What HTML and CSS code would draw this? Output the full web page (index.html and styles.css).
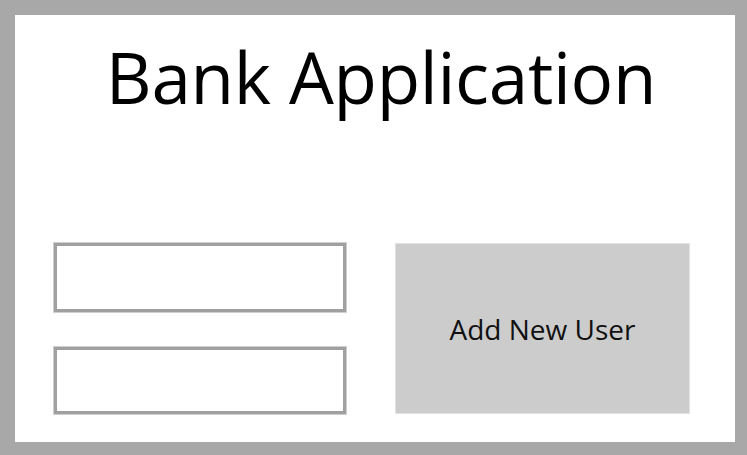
FILE: index.html
```html
<!DOCTYPE html>
<html lang="en">
<head>
  <meta charset="UTF-8">
  <meta name="viewport" content="width=device-width, initial-scale=1.0">
  <title>Bank Application</title>
  <link rel="stylesheet" href="styles.css">
</head>
<body>
  <div class="window">
    <h1 class="title">Bank Application</h1>
    <div class="controls">
      <div class="fields">
        <input type="text" class="field">
        <input type="text" class="field">
      </div>
      <button type="button" class="add-btn">Add New User</button>
    </div>
  </div>
</body>
</html>
```

FILE: styles.css
```css
html, body {
  margin: 0;
  height: 100%;
}

body {
  background-color: #a8a8a8;
  padding: 15px 12px 13px 15px;
  box-sizing: border-box;
  font-family: "Open Sans", "Noto Sans", sans-serif;
}

.window {
  background-color: #fff;
  height: 100%;
  display: flex;
  flex-direction: column;
  padding: 0 45px 28px 39px;
  box-sizing: border-box;
}

.title {
  margin: 19px 0 0 0;
  padding-left: 18px;
  font-size: 71px;
  font-weight: 400;
  line-height: 1.2;
  letter-spacing: -0.3px;
  text-align: center;
  color: #000;
}

.controls {
  margin-top: auto;
  display: flex;
  gap: 49px;
}

.fields {
  width: 292px;
  display: flex;
  flex-direction: column;
  justify-content: space-between;
}

.field {
  height: 69px;
  border: 3px solid #a0a0a0;
  box-shadow: 0 0 0 1px #cfcfcf;
  background: #fff;
  box-sizing: border-box;
  margin: 0;
  outline: none;
}

.field + .field {
  height: 67px;
}

.add-btn {
  width: 295px;
  height: 171px;
  background-color: #cccccc;
  border: 1px solid #e2e2e2;
  font-family: inherit;
  font-size: 28px;
  color: #111;
  padding: 0;
}
```
